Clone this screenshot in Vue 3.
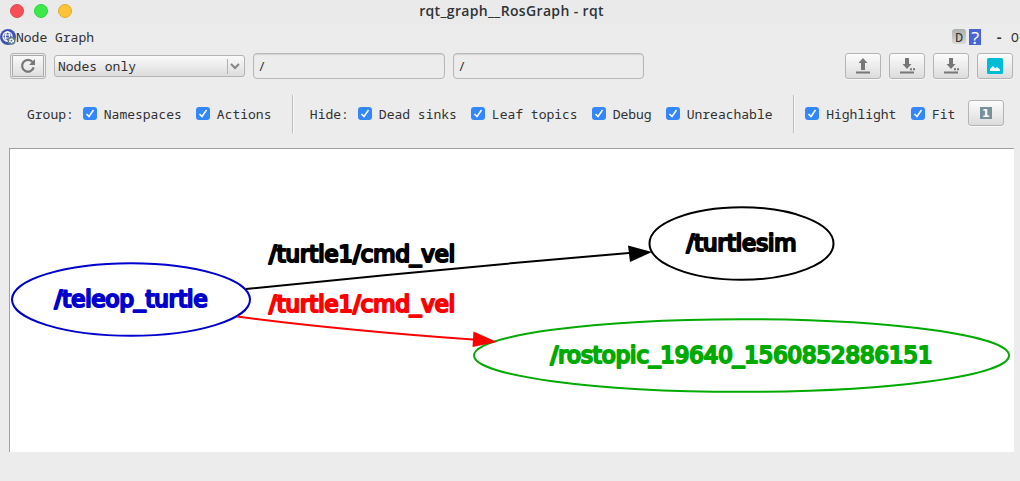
<script setup>
const groupOptions = ['Namespaces', 'Actions']
const hideOptions = ['Dead sinks', 'Leaf topics', 'Debug', 'Unreachable']
const viewOptions = ['Highlight', 'Fit']
const nodes = [
  { name: '/teleop_turtle', cx: 131, cy: 299.5, rx: 119, ry: 36.3, x: 54.5, y: 307, w: 153, color: '#0000cc' },
  { name: '/turtlesim', cx: 741.5, cy: 243.5, rx: 92, ry: 36.3, x: 686.5, y: 251, w: 110, color: '#000000' },
  { name: '/rostopic_19640_1560852886151', cx: 741.5, cy: 355.5, rx: 267.5, ry: 36.3, x: 550.5, y: 363, w: 382, color: '#00aa00' },
]
const edges = [
  { name: '/turtle1/cmd_vel', path: 'M246 289 Q440 269 629 253', head: '628,245.5 652,252 630,262', x: 269, y: 262.4, w: 186, color: '#000000' },
  { name: '/turtle1/cmd_vel', path: 'M237 316.5 Q340 330 473 339.5', head: '473.5,331.5 497,342 472.5,347', x: 269, y: 312.4, w: 186, color: '#ff0000' },
]
</script>

<template>
  <div class="window">
    <header class="titlebar">
      <div class="lights"><i class="close"></i><i class="max"></i><i class="min"></i></div>
      <span class="title">rqt_graph__RosGraph - rqt</span>
    </header>

    <div class="dock">
      <svg class="globe" width="16" height="16" viewBox="0 0 16 16">
        <circle cx="8" cy="8" r="8" fill="#3f51b5" />
        <g fill="none" stroke="#fff" stroke-width="1.1">
          <circle cx="7.5" cy="7.5" r="4.6" />
          <ellipse cx="7.5" cy="7.5" rx="2" ry="4.6" />
          <path d="M3 6h9M3 9h9" />
        </g>
        <circle cx="11.5" cy="11.7" r="4" fill="#607d8b" />
        <circle cx="11.5" cy="11.7" r="1.8" fill="none" stroke="#fff" stroke-width="1.5" stroke-dasharray="1.2 .7" />
        <circle cx="11.5" cy="11.7" r="1.5" fill="none" stroke="#fff" stroke-width=".8" />
      </svg>
      <span>Node Graph</span>
      <div class="dock-actions">
        <span class="d-button">D</span>
        <span class="help">?</span>
        <span class="minus">-</span>
        <span class="float">O</span>
      </div>
    </div>

    <div class="toolbar">
      <button class="btn focused">
        <svg width="18" height="18" viewBox="0 0 18 18">
          <path d="M13.6 5A5.900 5.900 0 1 0 14.700 10.400" fill="none" stroke="#777" stroke-width="2.200" />
          <path d="M16 2v6h-6z" fill="#777" />
        </svg>
      </button>
      <div class="combo">
        <span>Nodes only</span>
        <i class="combo-arrow"><svg width="10" height="7" viewBox="0 0 10 7"><path d="M1 1l4 4 4-4" fill="none" stroke="#858585" stroke-width="2" /></svg></i>
      </div>
      <div class="field first">/</div>
      <div class="field">/</div>
      <div class="file-actions">
        <button class="btn">
          <svg width="16" height="16" viewBox="0 0 16 16" fill="#777"><path d="M8 0l4.500 5H10v7H6V5H3.500z M1 13.500h14v2H1z" /></svg>
        </button>
        <button v-for="n in 2" :key="n" class="btn">
          <svg width="16" height="16" viewBox="0 0 16 16" fill="#777"><path d="M6 0h4v6h2.500L8 11 3.500 6H6z M1 13.500h14v2H1z M11 10.300h2v2h-2z M14 10.300h2v2h-2z" /></svg>
        </button>
        <button class="btn">
          <svg width="16" height="16" viewBox="0 0 16 16"><rect width="16" height="16" rx="1.500" fill="#00bcd4" /><path d="M3 13v-2l3-3 2 2.500 2-1.500 3 2.500V13z" fill="#fff" /></svg>
        </button>
      </div>
    </div>

    <div class="options">
      <div class="group">
        <span class="caption">Group:</span>
        <label v-for="o in groupOptions" :key="o"><i class="check"><svg width="14" height="13" viewBox="0 0 14 13"><path d="M3.500 7l2.500 2.500 4.500-6.500" /></svg></i>{{ o }}</label>
      </div>
      <i class="sep"></i>
      <div class="group hide">
        <span class="caption">Hide:</span>
        <label v-for="o in hideOptions" :key="o"><i class="check"><svg width="14" height="13" viewBox="0 0 14 13"><path d="M3.500 7l2.500 2.500 4.500-6.500" /></svg></i>{{ o }}</label>
      </div>
      <i class="sep"></i>
      <div class="group view">
        <label v-for="o in viewOptions" :key="o"><i class="check"><svg width="14" height="13" viewBox="0 0 14 13"><path d="M3.500 7l2.500 2.500 4.500-6.500" /></svg></i>{{ o }}</label>
      </div>
      <button class="btn fit-button"><span class="one">1</span></button>
    </div>

    <main class="canvas">
      <svg width="1004" height="303" viewBox="10 149 1004 303">
        <g v-for="n in nodes" :key="n.name">
          <ellipse :cx="n.cx" :cy="n.cy" :rx="n.rx" :ry="n.ry" fill="none" :stroke="n.color" stroke-width="2" />
          <text :x="n.x" :y="n.y" :textLength="n.w" lengthAdjust="spacingAndGlyphs" :fill="n.color" :stroke="n.color">{{ n.name }}</text>
        </g>
        <g v-for="e in edges" :key="e.color">
          <path :d="e.path" fill="none" :stroke="e.color" stroke-width="2" />
          <polygon :points="e.head" :fill="e.color" />
          <text :x="e.x" :y="e.y" :textLength="e.w" lengthAdjust="spacingAndGlyphs" :fill="e.color" :stroke="e.color">{{ e.name }}</text>
        </g>
      </svg>
    </main>
  </div>
</template>

<style>
body { background: #ececec; overflow: hidden; }
</style>

<style scoped>
* { box-sizing: border-box; }
.window { width: 1020px; height: 481px; background: #ececec; color: #303030; font: 13px/16px "Noto Sans Mono", "DejaVu Sans Mono", monospace; overflow: hidden; }
.titlebar { height: 24px; background: #eaeaea; display: grid; grid-template-columns: 1fr auto 1fr; align-items: start; }
.lights { display: flex; gap: 10px; padding: 4px 0 0 10px; }
.lights i { width: 14px; height: 14px; border-radius: 50%; border: 1px solid; }
.lights .close { background: #f64f57; border-color: #e0464e; }
.lights .max { background: #3bea49; border-color: #2fd13d; }
.lights .min { background: #fcc436; border-color: #e2ac2a; }
.title { font: 600 14px/22px "Open Sans", "Noto Sans", sans-serif; color: #2e3436; padding-left: 3px; letter-spacing: .35px; }
.dock { height: 29px; padding-top: 5px; display: flex; align-items: flex-start; }
.globe { flex: none; }
.dock > span { line-height: 17px; }
.dock-actions { display: flex; margin-left: auto; margin-right: -1px; }
.d-button { width: 14px; height: 15px; line-height: 16px; text-align: center; border-radius: 3px; background: linear-gradient(#aab0ac, #d8dad8); font-size: 13px; }
.help { width: 12px; height: 16px; line-height: 17px; text-align: center; color: #fff; background: #4a64d4; margin-left: 3px; font-size: 17px; }
.minus { margin-left: 14px; line-height: 17px; font-weight: bold; }
.float { margin-left: 8px; width: 10px; line-height: 17px; }
.toolbar { height: 26px; display: flex; align-items: center; padding: 0 7px 0 10px; }
.btn { appearance: none; width: 36px; height: 26px; padding: 0; border: 1px solid #b4b4b4; border-radius: 3px; background: linear-gradient(#fcfcfc, #dcdcdc); display: flex; align-items: center; justify-content: center; flex: none; box-shadow: 0 1px 0 #f8f8f8; }
.focused { box-shadow: inset 0 0 0 1px #eee, inset 0 0 0 2px #aaa; }
.combo { width: 191px; height: 22px; margin-left: 8px; border: 1px solid #b4b4b4; border-radius: 3px; background: linear-gradient(#fafafa, #dcdcdc); padding-left: 3px; display: flex; align-items: center; justify-content: space-between; }
.combo span { line-height: 18px; }
.combo-arrow { height: 15px; width: 17px; border-left: 1px solid #b0b0b0; display: flex; align-items: center; padding-left: 2px; }
.field { width: 191px; height: 26px; margin-left: 8px; border: 1px solid #b7b7b7; border-radius: 4px; padding: 4px 4px; box-shadow: inset 0 1px 1px #d4d4d4; line-height: 17px; }
.first { width: 192px; }
.file-actions { display: flex; gap: 8px; margin-left: auto; }
.options { display: flex; align-items: center; height: 38px; margin: 16px 0 15px; padding-left: 27px; }
.group { display: flex; align-items: center; }
.caption { margin-right: 9px; }
.group label { display: flex; align-items: center; margin-right: 14px; white-space: nowrap; }
.group label:last-child { margin-right: 0; }
.check { width: 14px; height: 13px; margin-right: 7px; margin-top: -2px; border-radius: 3px; background: #3387fb; display: flex; }
.check path { fill: none; stroke: #fff; stroke-width: 1.5; }
.sep { width: 2px; height: 38px; background: #bdbdbd; border-right: 1px solid #f8f8f8; margin: 0 16px 0 20.700px; flex: none; }
.hide { margin-left: -.3px; }
.sep + .view { margin-left: -6px; }
.view label { margin-right: 14.500px; }
.fit-button { margin: -3px 0 0 12.500px; }
.one { width: 12px; height: 12px; background: #78909c; color: #fff; font: bold 11px/13px "DejaVu Sans", sans-serif; }
.canvas { margin-left: 9px; width: 1005px; height: 304px; background: #fff; border: solid #a0a0a0; border-width: 1px 0 0 1px; }
.canvas svg { display: block; }
.canvas text { font: 22.500px "DejaVu Sans Condensed", "DejaVu Sans", sans-serif; stroke-width: 2.1px; stroke-linejoin: round; }
</style>
